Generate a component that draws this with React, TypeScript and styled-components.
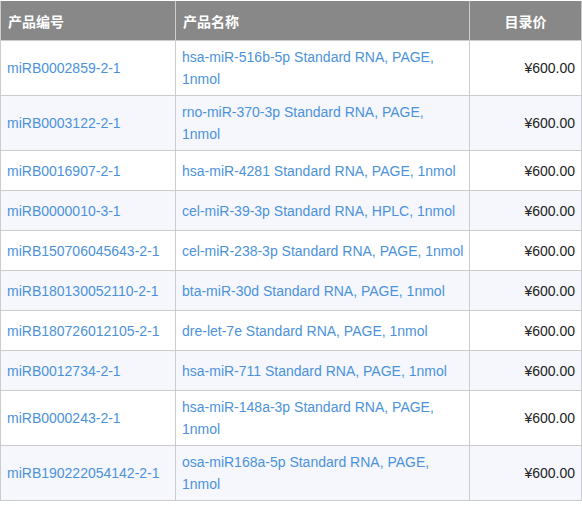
import React from "react";
import styled, { createGlobalStyle } from "styled-components";

const Global = createGlobalStyle`
  html, body { margin: 0; padding: 0; background: #fff; }
  body { font-family: "Liberation Sans", Arial, "Noto Sans CJK SC", sans-serif; }
`;

const Wrap = styled.div`
  padding: 1px 0 0 0;
  width: 581px;
`;

const Table = styled.table`
  width: 581px;
  border-collapse: collapse;
  table-layout: fixed;
  font-size: 14px;
  line-height: 22px;
`;

const HeadCell = styled.th<{ $align?: string }>`
  background: #888888;
  color: #fff;
  font-weight: bold;
  font-family: "Noto Sans CJK SC", "Liberation Sans", sans-serif;
  font-size: 14px;
  text-align: ${(p) => p.$align || "left"};
  height: 39px;
  padding: 0 7px;
  border: 1px solid #cccccc;
  border-top: none;
`;

const Row = styled.tr<{ $alt: boolean }>`
  height: 40px;
  background: ${(p) => (p.$alt ? "#f5f7fd" : "#ffffff")};
`;

const Cell = styled.td<{ $align?: string }>`
  border: 1px solid #cccccc;
  padding: 5px ${(p) => (p.$align === "right" ? "6px" : "5px")} 5px 6px;
  text-align: ${(p) => p.$align || "left"};
  vertical-align: middle;
  color: #222;
`;

const Link = styled.a`
  color: #4b92db;
  text-decoration: none;
`;

const rows: [string, string][] = [
  ["miRB0002859-2-1", "hsa-miR-516b-5p Standard RNA, PAGE, 1nmol"],
  ["miRB0003122-2-1", "rno-miR-370-3p Standard RNA, PAGE, 1nmol"],
  ["miRB0016907-2-1", "hsa-miR-4281 Standard RNA, PAGE, 1nmol"],
  ["miRB0000010-3-1", "cel-miR-39-3p Standard RNA, HPLC, 1nmol"],
  ["miRB150706045643-2-1", "cel-miR-238-3p Standard RNA, PAGE, 1nmol"],
  ["miRB180130052110-2-1", "bta-miR-30d Standard RNA, PAGE, 1nmol"],
  ["miRB180726012105-2-1", "dre-let-7e Standard RNA, PAGE, 1nmol"],
  ["miRB0012734-2-1", "hsa-miR-711 Standard RNA, PAGE, 1nmol"],
  ["miRB0000243-2-1", "hsa-miR-148a-3p Standard RNA, PAGE, 1nmol"],
  ["miRB190222054142-2-1", "osa-miR168a-5p Standard RNA, PAGE, 1nmol"],
];

export default function App() {
  return (
    <Wrap>
      <Global />
      <Table>
        <colgroup>
          <col style={{ width: 175 }} />
          <col style={{ width: 294 }} />
          <col style={{ width: 112 }} />
        </colgroup>
        <thead>
          <tr>
            <HeadCell>产品编号</HeadCell>
            <HeadCell>产品名称</HeadCell>
            <HeadCell $align="center">目录价</HeadCell>
          </tr>
        </thead>
        <tbody>
          {rows.map(([id, name], i) => (
            <Row key={id} $alt={i % 2 === 1}>
              <Cell>
                <Link href="#">{id}</Link>
              </Cell>
              <Cell>
                <Link href="#">{name}</Link>
              </Cell>
              <Cell $align="right">¥600.00</Cell>
            </Row>
          ))}
        </tbody>
      </Table>
    </Wrap>
  );
}
